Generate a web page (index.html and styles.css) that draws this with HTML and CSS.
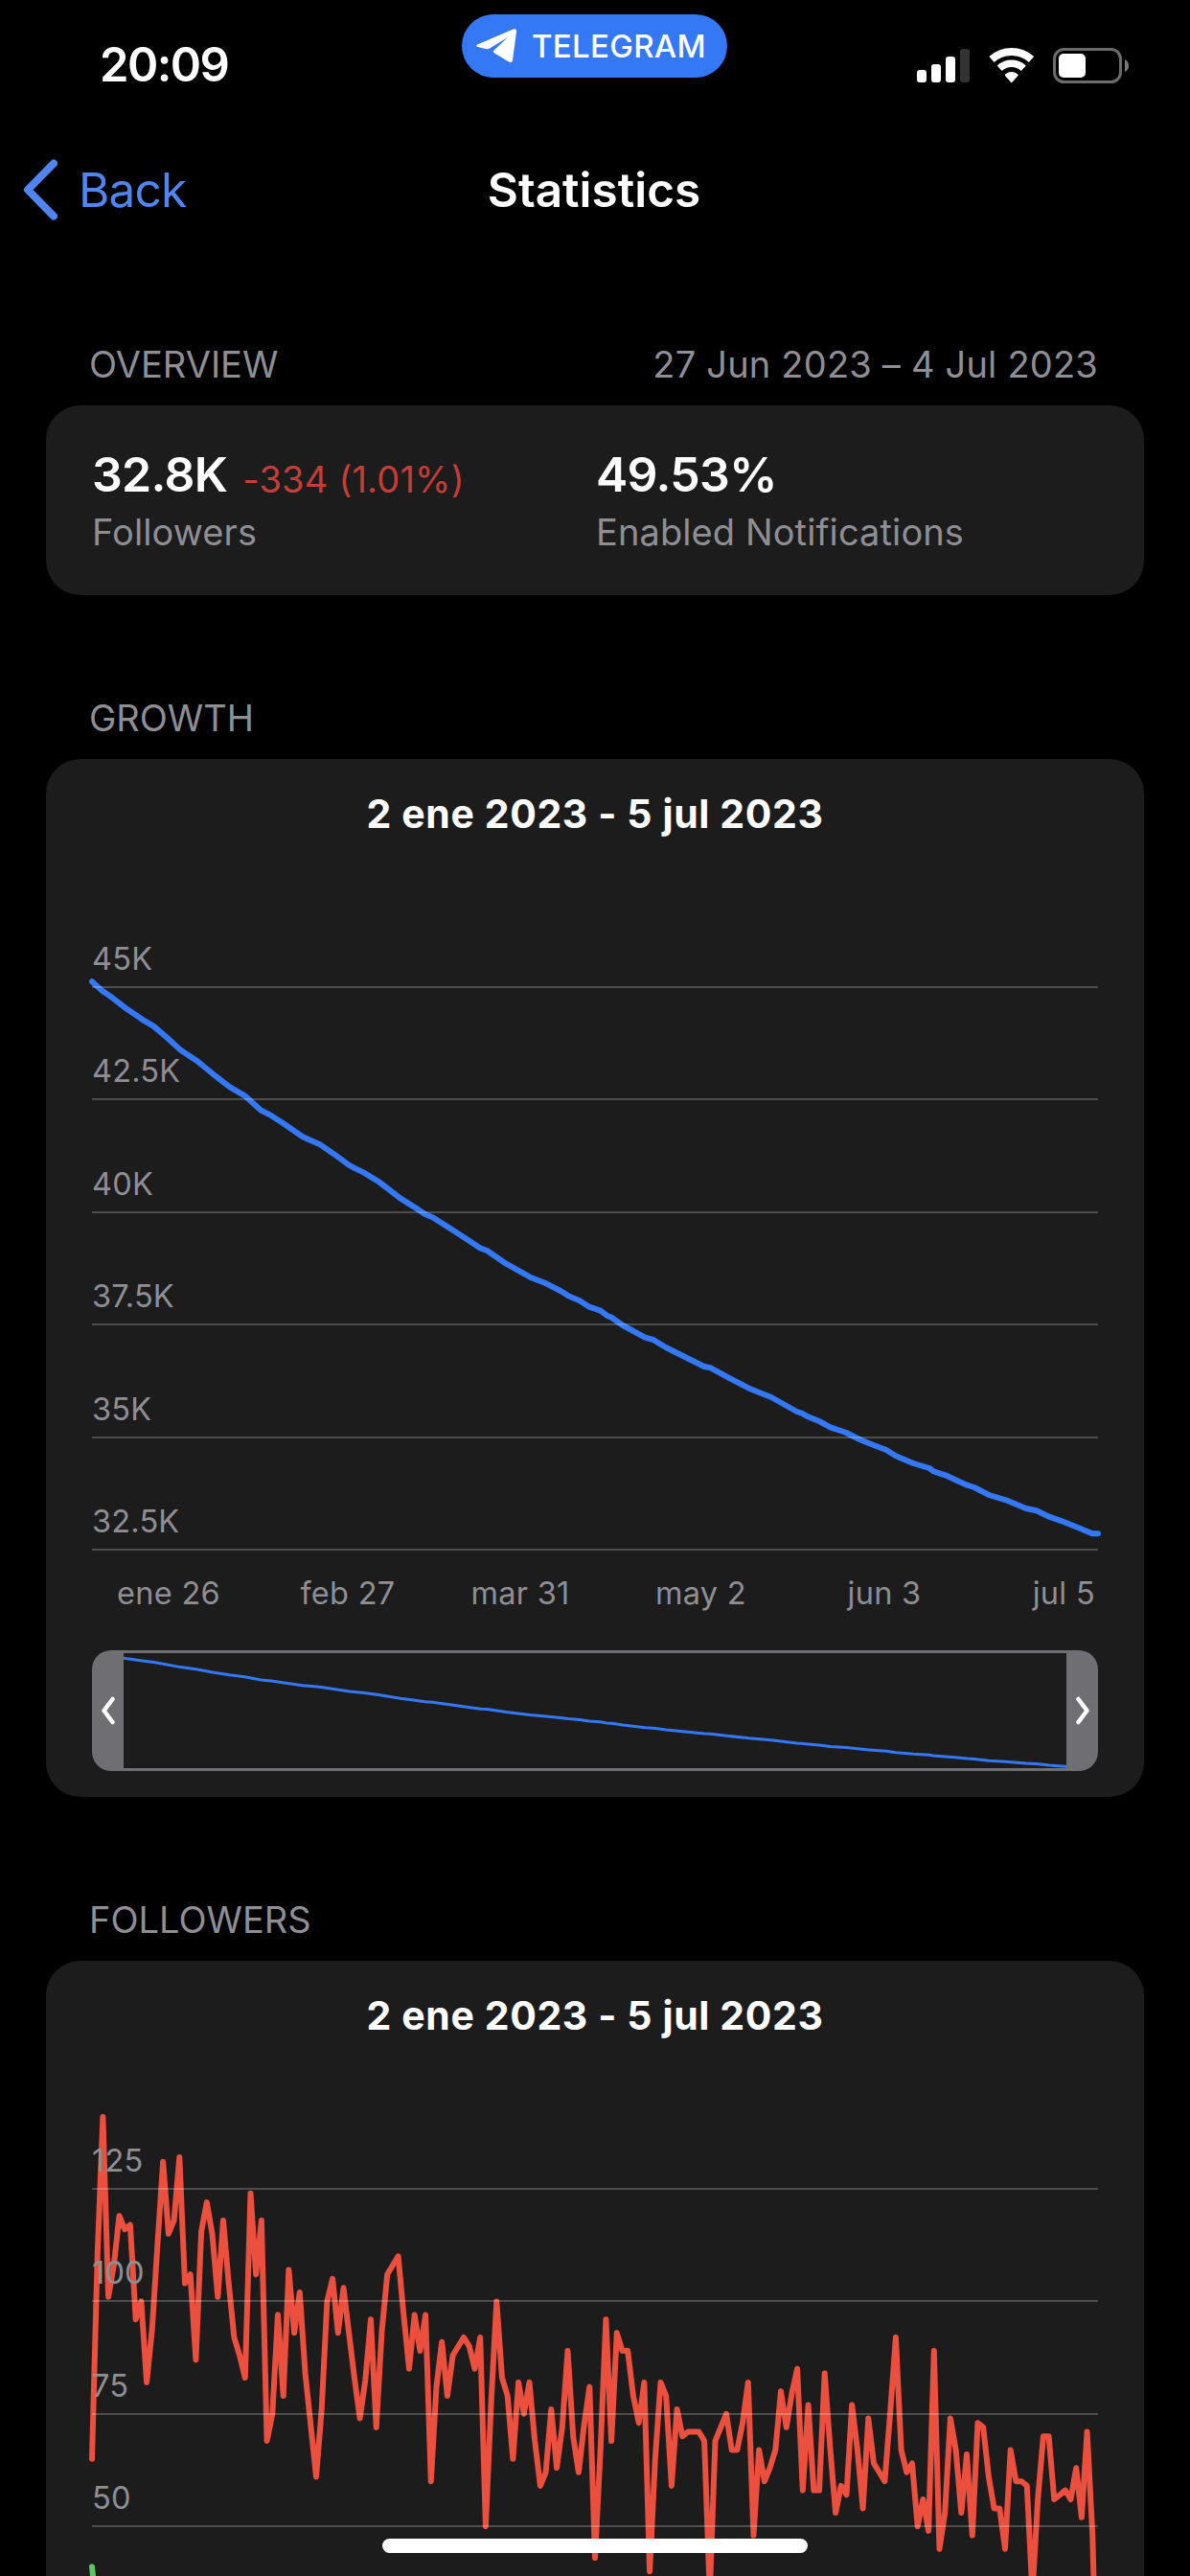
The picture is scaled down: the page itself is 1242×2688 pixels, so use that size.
FILE: index.html
```html
<!DOCTYPE html>
<html lang="en">
<head>
    <meta charset="UTF-8">
    <meta name="viewport" content="width=device-width, initial-scale=1.0">
    <title>Statistics</title>
    <link rel="stylesheet" href="styles.css">
</head>
<body>
    <header class="status-bar">
        <div class="time">20:09</div>
        <div class="app-pill">
            <svg width="42" height="36" viewBox="0 0 42 36">
                <path fill="#fff" d="M1 16.500L38.500 .5Q42.500 -.5 42 3L38 33Q37 36.500 34 34.500L19 25.500Q17 24 18.500 22.500L33 9L14 20.500Q12 21.800 10 21L1.500 19Q-1 18 1 16.500Z"/>
            </svg>
            <span>TELEGRAM</span>
        </div>
        <div class="status-icons">
            <svg class="signal" width="55" height="36" viewBox="0 0 55 36" fill="#fff">
                <rect x="0" y="23" width="10" height="13" rx="3"/>
                <rect x="15" y="17" width="10" height="19" rx="3"/>
                <rect x="30" y="9" width="10" height="27" rx="3"/>
                <rect x="45" y="1" width="10" height="35" rx="3" fill="#333"/>
            </svg>
            <svg class="wifi" width="48" height="37" viewBox="0 0 48 37" fill="none" stroke="#fff">
                <path stroke-width="8" d="M3 12A31 31 0 0 1 44.500 12"/>
                <path stroke-width="7.500" d="M11.200 21.200A18.700 18.700 0 0 1 36.300 21.200"/>
                <path fill="#fff" stroke="none" d="M23.750 36.500L17 29Q16.500 28 17.500 27.300A10 10 0 0 1 30 27.300Q31 28 30.500 29Z"/>
            </svg>
            <svg class="battery" width="80" height="37" viewBox="0 0 80 37">
                <rect x="1.500" y="1.500" width="69" height="34" rx="10" fill="none" stroke="#6b6b6b" stroke-width="3"/>
                <rect x="6" y="6" width="28" height="25" rx="5" fill="#fff"/>
                <path d="M75 12Q79 14 79 18.500T75 25Z" fill="#7a7a7a"/>
            </svg>
        </div>
    </header>

    <nav class="nav-bar">
        <a class="back">
            <svg width="36" height="64" viewBox="0 0 36 64" fill="none" stroke="#5085ef" stroke-width="8" stroke-linecap="round" stroke-linejoin="round">
                <path d="M32 4.500L5 32L32 59.500"/>
            </svg>
            <span>Back</span>
        </a>
        <h1>Statistics</h1>
    </nav>

    <main>
        <section>
            <div class="section-header">
                <span>OVERVIEW</span>
                <span class="period">27 Jun 2023 – 4 Jul 2023</span>
            </div>
            <div class="card overview">
                <div>
                    <p class="value">32.8K <span class="delta">-334 (1.01%)</span></p>
                    <p class="label">Followers</p>
                </div>
                <div>
                    <p class="value">49.53%</p>
                    <p class="label">Enabled Notifications</p>
                </div>
            </div>
        </section>

        <section>
            <div class="section-header"><span>GROWTH</span></div>
            <div class="card chart">
                <h2>2 ene 2023 - 5 jul 2023</h2>
                <div class="plot">
                    <svg class="lines" width="1050" height="587" viewBox="0 0 1050 587">
                        <polyline id="growth" class="line blue"/>
                    </svg>
                    <div class="row">45K</div>
                    <div class="row">42.5K</div>
                    <div class="row">40K</div>
                    <div class="row">37.5K</div>
                    <div class="row">35K</div>
                    <div class="row">32.5K</div>
                </div>
                <div class="dates">
                    <span>ene 26</span>
                    <span>feb 27</span>
                    <span>mar 31</span>
                    <span>may 2</span>
                    <span>jun 3</span>
                    <span>jul 5</span>
                </div>
                <div class="range">
                    <div class="handle">
                        <svg width="16" height="30" viewBox="0 0 16 30"><path d="M12.500 3L3.500 15L12.500 27"/></svg>
                    </div>
                    <svg class="preview" viewBox="33 0 984 120">
                        <polyline id="growth-preview"/>
                    </svg>
                    <div class="handle">
                        <svg width="16" height="30" viewBox="0 0 16 30"><path d="M3.500 3L12.500 15L3.500 27"/></svg>
                    </div>
                </div>
            </div>
        </section>

        <section>
            <div class="section-header"><span>FOLLOWERS</span></div>
            <div class="card chart chart-open">
                <h2>2 ene 2023 - 5 jul 2023</h2>
                <div class="plot">
                    <svg class="lines" width="1050" height="352" viewBox="0 0 1050 352">
                        <polyline id="joined" class="line green"/>
                        <polyline id="left" class="line red"/>
                    </svg>
                    <div class="row">125</div>
                    <div class="row">100</div>
                    <div class="row">75</div>
                    <div class="row">50</div>
                </div>
            </div>
        </section>
    </main>

    <div class="home-indicator"></div>

    <script src="script.js"></script>
</body>
</html>
```
FILE: styles.css
```css
* {
    box-sizing: border-box;
}

html {
    overflow: hidden;
}

body {
    margin: 0;
    height: 2688px;
    overflow: hidden;
    background: #000;
    color: #fff;
    font-family: Inter, "Liberation Sans", sans-serif;
}

h1, h2, p {
    margin: 0;
}

svg {
    display: block;
    flex: none;
}

/* status bar */
.status-bar {
    display: grid;
    grid-template-columns: 482px 277px 1fr;
    height: 136px;
}

.time {
    padding-left: 104px;
    font-size: 49px;
    font-weight: 600;
    line-height: 136px;
    letter-spacing: -1.6px;
}

.app-pill {
    display: flex;
    align-items: center;
    gap: 16px;
    height: 66px;
    margin-top: 15px;
    padding-left: 15px;
    border-radius: 33px;
    background: #3478f6;
    font-size: 33px;
    font-weight: 500;
    letter-spacing: 0.3px;
}

.status-icons {
    display: flex;
    align-items: center;
    padding-left: 198px;
}

.wifi {
    margin-left: 20px;
}

.battery {
    margin-left: 19px;
}

/* navigation */
.nav-bar {
    display: grid;
    grid-template-columns: 1fr auto 1fr;
    align-items: center;
    height: 124px;
    padding: 0 26px 0 24px;
    line-height: 60px;
}

.back {
    display: flex;
    align-items: center;
    gap: 22px;
    color: #5085ef;
    font-size: 49.5px;
    letter-spacing: -0.8px;
}

.nav-bar h1 {
    font-size: 49.5px;
    font-weight: 600;
    letter-spacing: 0;
}

/* sections */
main {
    display: flex;
    flex-direction: column;
    gap: 105px;
    padding: 97px 48px 0;
}

.section-header {
    display: flex;
    justify-content: space-between;
    padding: 0 48px 20px 45px;
    font-size: 38px;
    line-height: 46px;
    color: #8e8e93;
}

.period {
    letter-spacing: 0.2px;
}

.card {
    border-radius: 36px;
    background: #1c1c1d;
}

.overview {
    display: grid;
    grid-template-columns: 526px 1fr;
    height: 198px;
    padding: 42px 48px 0;
    line-height: 60px;
}

.value {
    height: 60px;
    font-size: 50px;
    font-weight: 600;
    letter-spacing: -0.7px;
}

.delta {
    margin-left: 4px;
    font-size: 38px;
    font-weight: 400;
    line-height: 40px;
    letter-spacing: 0.2px;
    vertical-align: -1px;
    color: #c33e37;
}

.label {
    font-size: 38px;
    letter-spacing: 0.1px;
    color: #8e8e93;
}

/* charts */
.chart {
    padding: 27px 48px;
}

/* runs on below the screen edge */
.chart-open {
    padding-bottom: 51px;
    border-radius: 36px 36px 0 0;
}

.chart h2 {
    font-size: 41px;
    font-weight: 700;
    line-height: 60px;
    letter-spacing: 0.6px;
    text-align: center;
}

.plot {
    position: relative;
    margin-top: 34.6px;
}

.row {
    position: relative;
    display: flex;
    align-items: flex-end;
    height: 117.4px;
    padding-bottom: 8px;
    border-bottom: 2px solid rgba(255, 255, 255, 0.22);
    font-size: 32.5px;
    line-height: 40px;
    letter-spacing: 0.2px;
    color: #8e8e93;
}

/* the drawing starts on the first grid line */
.lines {
    position: absolute;
    left: 0;
    top: 116.4px;
    overflow: visible;
}

.line {
    fill: none;
    stroke-width: 6;
    stroke-linecap: round;
    stroke-linejoin: round;
}

.blue {
    stroke: #3478f6;
}

.red {
    stroke: #eb4f3d;
}

.green {
    stroke: #5fc562;
}

.dates {
    display: grid;
    grid-template-columns: 160px 214px 146px 231px 152px 1fr;
    padding: 25px 3px 39px 0;
    font-size: 32.5px;
    line-height: 40px;
    letter-spacing: 0.3px;
    text-align: center;
    color: #8e8e93;
}

.dates span:last-child {
    text-align: right;
}

.range {
    display: flex;
    height: 126px;
    border-radius: 20px;
    overflow: hidden;
    background: #6e6e73;
}

.preview {
    flex: 1;
    height: 120px;
    margin: 3px 0;
    background: #1c1c1d;
}

.preview polyline {
    fill: none;
    stroke: #3478f6;
    stroke-width: 3;
}

.handle {
    display: flex;
    align-items: center;
    justify-content: center;
    width: 33px;
}

.handle path {
    fill: none;
    stroke: #fff;
    stroke-width: 4.5;
    stroke-linecap: round;
    stroke-linejoin: round;
}

.home-indicator {
    position: absolute;
    left: 399px;
    top: 2649px;
    width: 444px;
    height: 15px;
    border-radius: 8px;
    background: #fff;
}
```
FILE: script.js
```js
const growth = [
    [0, -5.8], [10.9, 4.1], [20.8, 10.8], [36.7, 23.1], [52.5, 33.8], [64.4, 40.9], [78.3, 52.8],
    [92.1, 65.4], [109.9, 77.3], [125.8, 90.3], [143.6, 104.2], [159.4, 113.3], [176.5, 128.7],
    [187.2, 134.2], [199, 141.7], [219.6, 156], [228.8, 160.3], [237.5, 163.9], [252.5, 174.2],
    [269.1, 186.4], [284.2, 193.9], [299.2, 203], [321.8, 220.4], [335.7, 229.1], [347.6, 237],
    [355.5, 240.2], [375.3, 252.8], [391.1, 263.1], [405.7, 272.7], [412.3, 275], [432.3, 288.7],
    [457.3, 302.7], [474, 309.3], [489, 317], [497.3, 322.3], [509, 327.3], [519, 333.7],
    [530.7, 337.7], [537.3, 342.7], [542.3, 344.7], [554, 353], [577.3, 365.7], [585.7, 368],
    [599, 376], [639, 396], [645.7, 397.3], [664, 407.3], [685.7, 418.7], [709, 428],
    [735.7, 443], [740.7, 444.7], [747.3, 448.3], [759, 453], [770.7, 459.3], [787.3, 465],
    [799, 471], [810.7, 476], [829, 483], [839, 489.3], [857.3, 497], [874, 502], [878.3, 505.3],
    [890.7, 509.3], [900.7, 514], [913.3, 519.7], [920.7, 522], [936.3, 530], [954, 535.3],
    [974.7, 544], [985.7, 546.3], [999, 552.7], [1012.3, 557.3], [1034, 566], [1044, 570.3], [1050, 570.3]
];

// one value per day, 2 ene - 5 jul
const left = [
    65, 110, 141, 101, 108, 119, 116, 117, 96, 100, 82, 94, 113, 131, 115, 118, 132, 104, 106, 87,
    115.5, 122, 115, 101, 118, 104, 92, 88, 83, 124, 106, 118, 69, 75, 97, 79, 107, 93, 102, 84,
    72.5, 61, 76, 100, 105, 93, 103, 93, 83, 74, 82.5, 96, 72, 93, 106, 108, 110, 97, 85, 97,
    89, 97, 60, 81, 91, 79, 88, 90, 92, 90, 85, 92, 50, 77.5, 100, 83, 79, 65, 82, 75,
    82, 69, 59, 62, 76, 63, 72, 89, 70, 62, 72.5, 81, 43, 67, 96, 69, 93, 89, 89, 79,
    73, 82, 40, 65, 82, 79, 59, 76, 70, 71, 71, 71, 69, 35, 69, 72, 75, 67, 67, 73,
    82, 48, 67, 60, 63, 67, 80, 72, 79.5, 85, 58, 77, 58, 58, 84, 67.5, 53, 59, 57, 77,
    67, 54, 74, 64, 62, 60, 75.5, 92, 67, 62, 64, 50, 56, 49, 89, 45, 53, 74, 67, 53,
    66, 48, 73, 72, 61, 54, 54, 45, 67, 60, 60, 59, 35, 56, 70, 70, 56, 57, 58, 56,
    63, 52, 71, 48, 0
];

const joined = [41, 30, 24, 22, 20];

function points(values) {
    return values.map((v, i) => `${(i * 1050 / 184).toFixed(1)},${((125 - v) * 4.696).toFixed(1)}`).join(" ");
}

document.getElementById("growth").setAttribute("points", growth.join(" "));
document.getElementById("growth-preview").setAttribute("points",
    growth.map(([x, y]) => `${x},${(0.9 + y * 0.21).toFixed(1)}`).join(" "));
document.getElementById("left").setAttribute("points", points(left));
document.getElementById("joined").setAttribute("points", points(joined));
```
